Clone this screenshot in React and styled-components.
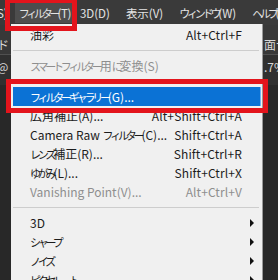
import React from "react";
import styled, { createGlobalStyle } from "styled-components";

const GlobalStyle = createGlobalStyle`
  * { box-sizing: border-box; }
  body {
    margin: 0;
    background: #262626;
    font-family: "Noto Sans CJK JP", "Noto Sans", sans-serif;
  }
`;

const menuBarItems = [
  { name: "フィルター(T)", active: true },
  { name: "3D(D)" },
  { name: "表示(V)" },
  { name: "ウィンドウ(W)" },
  { name: "ヘルプ(H)" },
];

const filterItems = [
  { name: "油彩", shortcut: "Alt+Ctrl+F" },
  { sep: true },
  { name: "スマートフィルター用に変換(S)", disabled: true },
  { sep: true },
  { name: "フィルターギャラリー(G)...", active: true },
  { name: "広角補正(A)...", shortcut: "Alt+Shift+Ctrl+A" },
  { name: "Camera Raw フィルター(C)...", shortcut: "Shift+Ctrl+A" },
  { name: "レンズ補正(R)...", shortcut: "Shift+Ctrl+R" },
  { name: "ゆがみ(L)...", shortcut: "Shift+Ctrl+X" },
  { name: "Vanishing Point(V)...", shortcut: "Alt+Ctrl+V", disabled: true },
  { sep: true },
  { name: "3D", sub: true },
  { name: "シャープ", sub: true },
  { name: "ノイズ", sub: true },
  { name: "ピクセレート", sub: true },
];

// kana in the UI font are narrow, so squeeze the kana runs a bit
const KANA = /([\u3040-\u30ff]+)/;
const jp = (text) =>
  text
    .split(KANA)
    .filter(Boolean)
    .map((part, i) => (KANA.test(part) ? <Kana key={i}>{part}</Kana> : part));

function App() {
  return (
    <>
      <GlobalStyle />
      <Screen>
        <MenuBar>
          <MenuItem $lead>{jp("選択範囲(S)")}</MenuItem>
          {menuBarItems.map((item, index) => (
            <MenuItem key={index} $active={item.active}>
              {jp(item.name)}
            </MenuItem>
          ))}
        </MenuBar>
        <OptionsBar>
          <Peek $left>ド</Peek>
          <Peek>面サイズ</Peek>
        </OptionsBar>
        <TabBar>
          <Peek $left>@</Peek>
          <Peek>.7%</Peek>
        </TabBar>
        <Canvas />

        <Dropdown>
          {filterItems.map((item, index) => {
            if (item.sep) return <Separator key={index} />;
            return (
              <Row key={index} $active={item.active} $disabled={item.disabled}>
                <Label>{jp(item.name)}</Label>
                {item.shortcut && <Shortcut>{item.shortcut}</Shortcut>}
                <ArrowSlot>{item.sub && <Arrow />}</ArrowSlot>
              </Row>
            );
          })}
        </Dropdown>

        <Callout $top={-2} $left={5} $width={72} $height={33} />
        <Callout $top={79} $left={6} $width={262} $height={34} />
      </Screen>
    </>
  );
}

export default App;

const Screen = styled.div`
  position: relative;
  width: 278px;
  height: 280px;
  overflow: hidden;
  display: flex;
  flex-direction: column;
  background: #282828;
  font-family: "Noto Sans CJK JP", "Noto Sans", sans-serif;
`;

const Kana = styled.span`
  font-size: 11px;
  letter-spacing: -3.2px;
`;

const MenuBar = styled.div`
  display: flex;
  align-items: center;
  height: 25px;
  flex-shrink: 0;
  background: #3a3a3a;
  white-space: nowrap;
`;

const MenuItem = styled.div`
  height: 20px;
  display: flex;
  align-items: center;
  padding: 0 1px 0 4px;
  margin-right: ${(p) => (p.$active ? "4px" : p.$lead ? "6px" : "11px")};
  margin-left: ${(p) => (p.$lead ? "-57px" : "0")};
  flex-shrink: 0;
  font-size: 11.5px;
  letter-spacing: ${(p) => (p.$active ? "-0.4px" : "0")};
  color: #e4e4e4;
  background: ${(p) => (p.$active ? "#4d4d4d" : "transparent")};
`;

const OptionsBar = styled.div`
  display: grid;
  grid-template-columns: 264px auto;
  align-items: center;
  height: 30px;
  flex-shrink: 0;
  padding-top: 10px;
  background: #383838;
  border-bottom: 1px solid #505050;
  white-space: nowrap;
  overflow: hidden;
`;

const TabBar = styled.div`
  display: grid;
  grid-template-columns: 264px auto;
  align-items: center;
  height: 30px;
  flex-shrink: 0;
  padding-bottom: 8px;
  background: #303030;
  white-space: nowrap;
  overflow: hidden;
`;

const Canvas = styled.div`
  flex: 1;
  background: #282828;
`;

const Peek = styled.span`
  font-size: 12px;
  color: #d8d8d8;
  margin-left: ${(p) => (p.$left ? "-3px" : "0")};
`;

const Dropdown = styled.div`
  position: absolute;
  top: 24px;
  left: 11px;
  width: 252px;
  padding-top: 1px;
  background: #f0f0f0;
  border-right: 1px solid #9a9a9a;
  display: flex;
  flex-direction: column;
`;

const Row = styled.div`
  display: flex;
  align-items: center;
  height: 19px;
  padding-left: 17px;
  margin: 0 1px 0 2px;
  font-size: 12px;
  white-space: nowrap;
  color: ${(p) => (p.$active ? "#ffffff" : p.$disabled ? "#8e8e8e" : "#1c1c1c")};
  background: ${(p) => (p.$active ? "#0b72d5" : "transparent")};
  box-shadow: ${(p) => (p.$active ? "inset -1px 0 0 #6fb7f3" : "none")};
`;

const Label = styled.span`
  flex: 1;
`;

const Shortcut = styled.span`
  font-size: 12px;
  letter-spacing: 0.1px;
`;

const ArrowSlot = styled.span`
  width: 19px;
  display: flex;
  justify-content: center;
  align-items: center;
`;

const Arrow = styled.span`
  width: 0;
  height: 0;
  border-top: 4px solid transparent;
  border-bottom: 4px solid transparent;
  border-left: 4px solid #111;
  margin-left: 1px;
`;

const Separator = styled.div`
  height: 12px;
  margin: 0 3px 0 2px;
  display: flex;
  align-items: center;
  &::after {
    content: "";
    flex: 1;
    height: 1px;
    background: #cdcdcd;
  }
`;

const Callout = styled.div`
  position: absolute;
  top: ${(p) => p.$top}px;
  left: ${(p) => p.$left}px;
  width: ${(p) => p.$width}px;
  height: ${(p) => p.$height}px;
  border: 5px solid #e3141c;
  pointer-events: none;
`;
